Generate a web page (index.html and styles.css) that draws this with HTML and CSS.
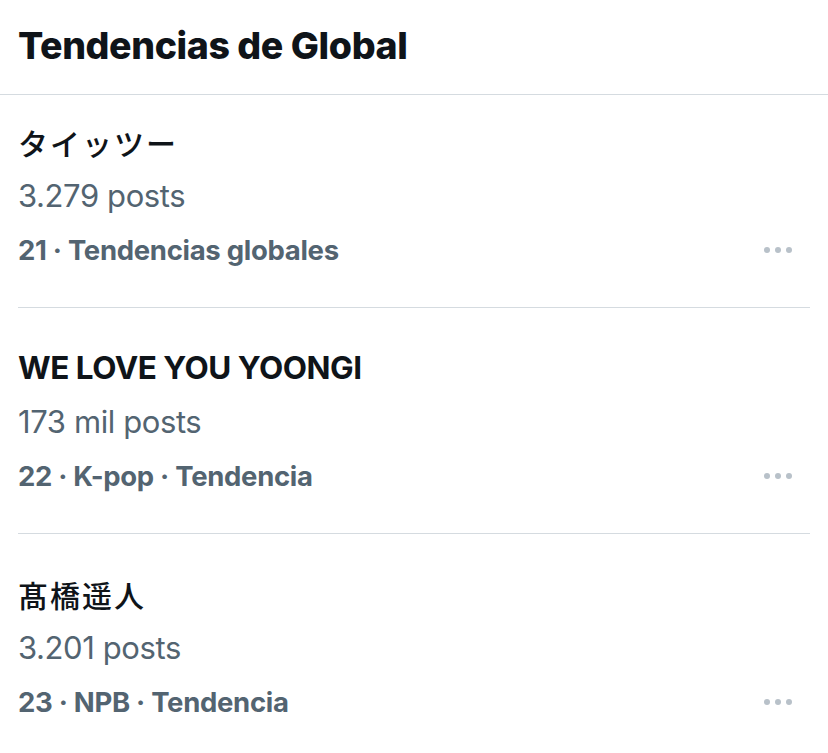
FILE: index.html
```html
<!DOCTYPE html>
<html lang="es">
<head>
<meta charset="utf-8">
<link rel="stylesheet" href="styles.css">
</head>
<body>
<div class="panel">
  <div class="header">Tendencias de Global</div>
  <div class="item first">
    <div class="title cjk">タイッツー</div>
    <div class="count">3.279 posts</div>
    <div class="meta"><span>21 · Tendencias globales</span><span class="more"><i></i><i></i><i></i></span></div>
  </div>
  <div class="item">
    <div class="title">WE LOVE YOU YOONGI</div>
    <div class="count">173 mil posts</div>
    <div class="meta"><span>22 · K-pop · Tendencia</span><span class="more"><i></i><i></i><i></i></span></div>
  </div>
  <div class="item last">
    <div class="title cjk">髙橋遥人</div>
    <div class="count">3.201 posts</div>
    <div class="meta"><span>23 · NPB · Tendencia</span><span class="more"><i></i><i></i><i></i></span></div>
  </div>
</div>
</body>
</html>
```

FILE: styles.css
```css
html, body {
  margin: 0;
  padding: 0;
  background: #ffffff;
}
body {
  font-family: Inter, "Noto Sans CJK JP", sans-serif;
  color: #0f1419;
  width: 828px;
  height: 753px;
  overflow: hidden;
}
.header {
  height: 94px;
  border-bottom: 1px solid #d5dbe0;
  padding-left: 18px;
  font-size: 37.5px;
  font-weight: 800;
  line-height: 92px;
  letter-spacing: -0.4px;
}
.item {
  margin: 0 18px;
  padding: 33px 0 30px;
  border-bottom: 1px solid #d5dbe0;
}
.item.first {
  padding-top: 20px;
}
.item.last {
  border-bottom: none;
}
.title {
  font-size: 31.5px;
  font-weight: 700;
  line-height: 54px;
  letter-spacing: -0.5px;
}
.title.cjk {
  font-family: "Noto Sans CJK JP", sans-serif;
  font-weight: 500;
  font-size: 30px;
  letter-spacing: 2px;
}
.count {
  font-size: 31px;
  font-weight: 400;
  line-height: 54px;
  color: #536471;
  letter-spacing: -0.4px;
}
.meta {
  display: flex;
  align-items: center;
  justify-content: space-between;
  font-size: 27.5px;
  font-weight: 700;
  line-height: 54px;
  color: #536471;
  letter-spacing: -0.3px;
}
.more {
  display: flex;
  gap: 5px;
  margin-right: 18px;
}
.more i {
  display: block;
  width: 6px;
  height: 6px;
  border-radius: 50%;
  background: #b8c1c9;
}
```
